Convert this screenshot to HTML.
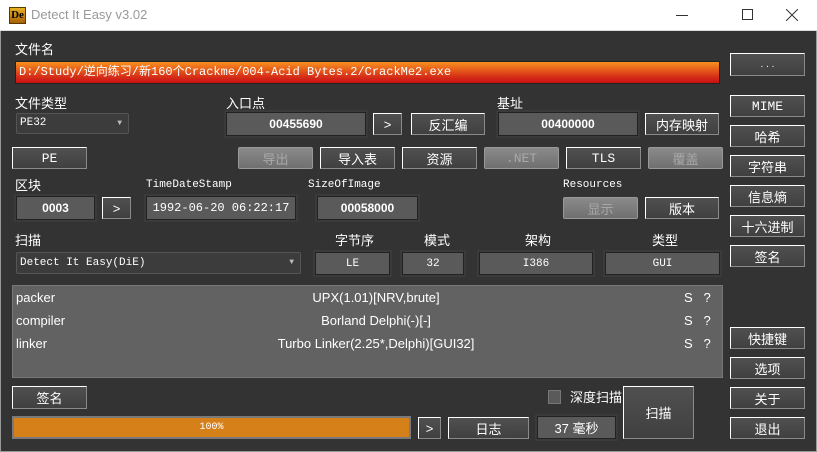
<!DOCTYPE html><html><head><meta charset="utf-8"><style>
*{box-sizing:border-box;margin:0;padding:0}
body{width:817px;height:452px;background:#333;position:relative;overflow:hidden;font-family:"Liberation Sans","Noto Sans CJK SC",sans-serif;color:#fff;font-size:13px}
.a{position:absolute}
.tb{left:0;top:0;width:817px;height:31px;background:#fff;border-bottom:1px solid #ddd}
.lb{position:absolute;font-size:13px;color:#fff;line-height:15px}
.ml{font-family:"Liberation Mono",monospace;font-size:11px}
.b{position:absolute;border:1px solid;border-color:#fff #8a8a8a #8a8a8a #fff;background:linear-gradient(#505050,#404040);color:#fff;text-align:center;font-size:13px;display:flex;align-items:center;justify-content:center}
.d{position:absolute;border:1px solid #999;border-radius:2px;background:linear-gradient(#8a8a8a,#707070);color:#a8a8a8;text-align:center;font-size:13px;display:flex;align-items:center;justify-content:center}
.f{position:absolute;border:1px solid #222;background:#5a5a5a;color:#fff;text-align:center;display:flex;align-items:center;justify-content:center;font-weight:bold;font-size:12px;box-shadow:0 0 0 2px #3a3a3a}
.f2{font-weight:normal;font-family:"Liberation Mono",monospace;font-size:12px}
</style></head><body>
<div class="a" style="left:0;top:31px;width:1px;height:421px;background:#999"></div>
<div class="a" style="left:816px;top:31px;width:1px;height:421px;background:#999"></div>
<div class="a" style="left:0;top:451px;width:817px;height:1px;background:#999"></div>
<div class="a tb"></div>
<div class="a" style="left:9px;top:7px;width:17px;height:17px;background:linear-gradient(#e8b020,#a86008);border:1px solid #5a3a00;color:#000;font-size:11px;font-weight:bold;line-height:15px;text-align:center;font-family:'Liberation Serif',serif">De</div>
<div class="a" style="left:31px;top:7px;color:#999;font-size:13px">Detect It Easy v3.02</div>
<div class="a" style="left:676px;top:15px;width:12px;height:1px;background:#333"></div>
<div class="a" style="left:742px;top:9px;width:11px;height:11px;border:1px solid #333"></div>
<svg class="a" style="left:786px;top:9px" width="12" height="12"><path d="M0 0L12 12M12 0L0 12" stroke="#333" stroke-width="1"/></svg>

<div class="lb" style="left:15px;top:42px">文件名</div>
<div class="a ml" style="left:15px;top:61px;width:705px;height:23px;background:linear-gradient(#f7901e,#d63018 70%,#c81010);border:1px solid #222;line-height:21px;padding-left:3px;color:#fff;font-size:12px">D:/Study/逆向练习/新160个Crackme/004-Acid Bytes.2/CrackMe2.exe</div>
<div class="b" style="left:730px;top:53px;width:75px;height:23px;font-size:10px">. . .</div>

<div class="lb" style="left:15px;top:96px">文件类型</div>
<div class="a ml" style="left:16px;top:113px;width:113px;height:21px;background:#3c3c3c;border:1px solid #555;border-radius:2px;line-height:19px;padding-left:3px;font-size:11px">PE32<span style="position:absolute;right:6px;top:0;font-size:8px;color:#bbb">▼</span></div>
<div class="lb" style="left:226px;top:96px">入口点</div>
<div class="f" style="left:226px;top:112px;width:140px;height:24px">00455690</div>
<div class="b" style="left:373px;top:113px;width:29px;height:22px">&gt;</div>
<div class="b" style="left:411px;top:113px;width:74px;height:22px">反汇编</div>
<div class="lb" style="left:497px;top:96px">基址</div>
<div class="f" style="left:498px;top:112px;width:140px;height:24px">00400000</div>
<div class="b" style="left:645px;top:113px;width:74px;height:22px">内存映射</div>

<div class="b ml" style="left:730px;top:95px;width:75px;height:22px">MIME</div>
<div class="b" style="left:730px;top:125px;width:75px;height:22px">哈希</div>
<div class="b" style="left:730px;top:155px;width:75px;height:22px">字符串</div>
<div class="b" style="left:730px;top:185px;width:75px;height:22px">信息熵</div>
<div class="b" style="left:730px;top:215px;width:75px;height:22px">十六进制</div>
<div class="b" style="left:730px;top:245px;width:75px;height:22px">签名</div>

<div class="b ml" style="left:12px;top:147px;width:75px;height:22px">PE</div>
<div class="d" style="left:238px;top:147px;width:75px;height:22px">导出</div>
<div class="b" style="left:320px;top:147px;width:75px;height:22px">导入表</div>
<div class="b" style="left:402px;top:147px;width:75px;height:22px">资源</div>
<div class="d ml" style="left:484px;top:147px;width:75px;height:22px">.NET</div>
<div class="b ml" style="left:566px;top:147px;width:75px;height:22px">TLS</div>
<div class="d" style="left:648px;top:147px;width:75px;height:22px">覆盖</div>

<div class="lb" style="left:15px;top:178px">区块</div>
<div class="f" style="left:16px;top:196px;width:79px;height:24px">0003</div>
<div class="b" style="left:102px;top:197px;width:29px;height:22px">&gt;</div>
<div class="lb ml" style="left:146px;top:178px">TimeDateStamp</div>
<div class="f f2" style="left:146px;top:196px;width:150px;height:24px">1992-06-20 06:22:17</div>
<div class="lb ml" style="left:308px;top:178px">SizeOfImage</div>
<div class="f" style="left:317px;top:196px;width:101px;height:24px">00058000</div>
<div class="lb ml" style="left:563px;top:178px">Resources</div>
<div class="d" style="left:563px;top:197px;width:75px;height:22px">显示</div>
<div class="b" style="left:645px;top:197px;width:74px;height:22px">版本</div>

<div class="lb" style="left:15px;top:233px">扫描</div>
<div class="a ml" style="left:16px;top:252px;width:285px;height:22px;background:#3c3c3c;border:1px solid #555;border-radius:2px;line-height:20px;padding-left:3px;font-size:11px">Detect It Easy(DiE)<span style="position:absolute;right:6px;top:0;font-size:8px;color:#bbb">▼</span></div>
<div class="lb" style="left:335px;top:233px">字节序</div>
<div class="lb" style="left:424px;top:233px">模式</div>
<div class="lb" style="left:525px;top:233px">架构</div>
<div class="lb" style="left:652px;top:233px">类型</div>
<div class="f f2" style="left:315px;top:252px;width:75px;height:23px;font-size:11px">LE</div>
<div class="f f2" style="left:402px;top:252px;width:62px;height:23px;font-size:11px">32</div>
<div class="f f2" style="left:479px;top:252px;width:114px;height:23px;font-size:11px">I386</div>
<div class="f f2" style="left:605px;top:252px;width:115px;height:23px;font-size:11px">GUI</div>

<div class="a" style="left:12px;top:285px;width:711px;height:93px;background:#626262;border:1px solid #777"></div>
<div class="lb" style="left:16px;top:290px">packer</div>
<div class="lb" style="left:16px;top:313px">compiler</div>
<div class="lb" style="left:16px;top:336px">linker</div>
<div class="lb" style="left:200px;width:352px;text-align:center;top:290px">UPX(1.01)[NRV,brute]</div>
<div class="lb" style="left:200px;width:352px;text-align:center;top:313px">Borland Delphi(-)[-]</div>
<div class="lb" style="left:200px;width:352px;text-align:center;top:336px">Turbo Linker(2.25*,Delphi)[GUI32]</div>
<div class="lb" style="left:684px;top:290px">S&nbsp;&nbsp;&nbsp;?</div>
<div class="lb" style="left:684px;top:313px">S&nbsp;&nbsp;&nbsp;?</div>
<div class="lb" style="left:684px;top:336px">S&nbsp;&nbsp;&nbsp;?</div>

<div class="b" style="left:730px;top:327px;width:75px;height:22px">快捷键</div>
<div class="b" style="left:730px;top:357px;width:75px;height:22px">选项</div>
<div class="b" style="left:730px;top:387px;width:75px;height:22px">关于</div>
<div class="b" style="left:730px;top:417px;width:75px;height:22px">退出</div>

<div class="b" style="left:12px;top:386px;width:75px;height:23px">签名</div>
<div class="a" style="left:548px;top:390px;width:13px;height:14px;background:#5a5a5a;border:1px solid #777"></div>
<div class="lb" style="left:570px;top:390px">深度扫描</div>
<div class="b" style="left:623px;top:386px;width:71px;height:53px">扫描</div>
<div class="a" style="left:12px;top:416px;width:399px;height:23px;background:#d6801a;border:2px solid #7a7a7a;text-align:center;font-size:10px;line-height:19px;font-family:'Liberation Mono',monospace">100%</div>
<div class="b" style="left:418px;top:417px;width:23px;height:22px">&gt;</div>
<div class="b" style="left:448px;top:417px;width:81px;height:22px">日志</div>
<div class="f" style="left:537px;top:416px;width:79px;height:23px;font-weight:normal;font-size:13px">37 毫秒</div>
</body></html>
